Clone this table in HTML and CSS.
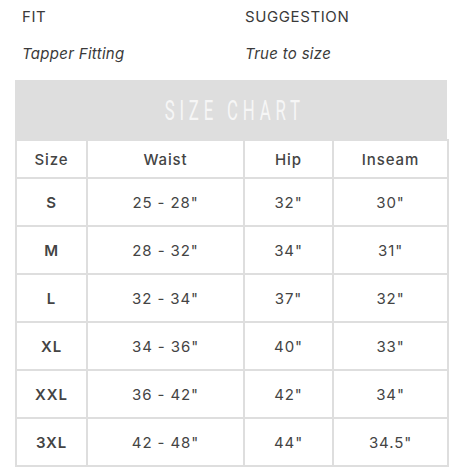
FILE: index.html
```html
<!DOCTYPE html>
<html>
<head>
<meta charset="utf-8">
<link rel="stylesheet" href="styles.css">
</head>
<body>
<div class="page">
  <div class="specs">
    <div class="spec-col">
      <div class="spec-label">FIT</div>
      <div class="spec-value">Tapper Fitting</div>
    </div>
    <div class="spec-col">
      <div class="spec-label">SUGGESTION</div>
      <div class="spec-value">True to size</div>
    </div>
  </div>
  <div class="chart">
    <div class="chart-title"><span class="chart-title-text">SIZE CHART</span></div>
    <table class="size-table">
      <colgroup>
        <col class="c1"><col class="c2"><col class="c3"><col class="c4">
      </colgroup>
      <thead>
        <tr><th>Size</th><th>Waist</th><th>Hip</th><th>Inseam</th></tr>
      </thead>
      <tbody>
        <tr><td class="sz">S</td><td>25 - 28"</td><td>32"</td><td>30"</td></tr>
        <tr><td class="sz">M</td><td>28 - 32"</td><td>34"</td><td>31"</td></tr>
        <tr><td class="sz">L</td><td>32 - 34"</td><td>37"</td><td>32"</td></tr>
        <tr><td class="sz">XL</td><td>34 - 36"</td><td>40"</td><td>33"</td></tr>
        <tr><td class="sz">XXL</td><td>36 - 42"</td><td>42"</td><td>34"</td></tr>
        <tr><td class="sz">3XL</td><td>42 - 48"</td><td>44"</td><td>34.5"</td></tr>
      </tbody>
    </table>
  </div>
</div>
</body>
</html>
```
FILE: styles.css
```css
* { box-sizing: border-box; }
html, body { margin: 0; padding: 0; background: #fff; }
body {
  font-family: Inter, "Noto Sans", sans-serif;
  color: #444;
}
.page {
  padding: 4px 12px 0 15px;
}
.specs {
  display: grid;
  grid-template-columns: 223px 1fr;
  padding-left: 7px;
}
.spec-label {
  font-size: 15px;
  line-height: 26px;
  letter-spacing: 0.6px;
  color: #3a3a3a;
}
.spec-value {
  font-size: 15px;
  font-style: italic;
  line-height: 26px;
  margin-top: 11px;
  letter-spacing: 0.3px;
  color: #3a3a3a;
}
.chart {
  margin-top: 13px;
  width: 432px;
}
.chart-title {
  background: #dedede;
  height: 59px;
  display: flex;
  align-items: center;
  justify-content: center;
}
.chart-title-text {
  display: inline-block;
  font-family: Roboto, sans-serif;
  font-weight: 400;
  font-size: 28px;
  letter-spacing: 8px;
  margin-right: -8px;
  color: #f6f6f6;
  transform: scaleX(0.6);
  padding-top: 1px;
}
.size-table {
  width: 432px;
  border-collapse: collapse;
  table-layout: fixed;
  border: 2px solid #dedede;
  border-top: none;
}
.c1 { width: 71px; }
.c2 { width: 157px; }
.c3 { width: 89px; }
.c4 { width: 115px; }
.size-table th, .size-table td {
  border: 2px solid #dedede;
  text-align: center;
  font-size: 15px;
  color: #444;
  letter-spacing: 0.9px;
}
.size-table th {
  height: 38px;
  font-weight: 500;
  padding: 0;
}
.size-table td {
  height: 48px;
  padding: 0;
  font-weight: 400;
}
.size-table td.sz {
  font-weight: 600;
}
```
